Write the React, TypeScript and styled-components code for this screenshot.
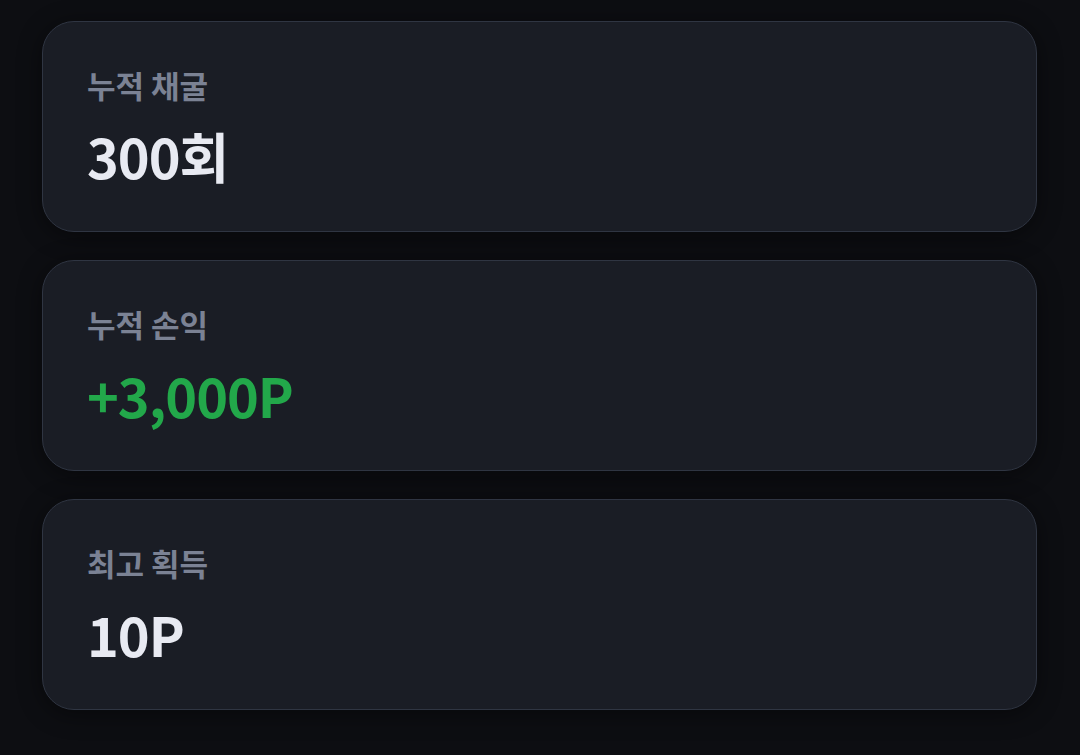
import React from 'react'
import styled, { createGlobalStyle } from 'styled-components'

const GlobalStyle = createGlobalStyle`
  html, body {
    margin: 0;
    padding: 0;
    background: #0d0e12;
  }
  body {
    font-family: 'Noto Sans CJK KR', 'Noto Sans', sans-serif;
  }
`

const Page = styled.div`
  min-height: 755px;
  box-sizing: border-box;
  padding: 21px 43px 0 42px;
  display: flex;
  flex-direction: column;
  gap: 28px;
  background: #0d0e12;
`
const Card = styled.div`
  height: 211px;
  box-sizing: border-box;
  padding: 0 44px;
  display: flex;
  flex-direction: column;
  justify-content: center;
  gap: 22px;
  background: #1a1d25;
  border: 1.5px solid #2f3542;
  border-radius: 32px;
  box-shadow: 0 4px 24px rgba(0, 0, 0, 0.45);
`
const Label = styled.div`
  font-size: 31px;
  font-weight: 700;
  line-height: 1.2;
  color: #7b8294;
`
const Value = styled.div<{ $tone?: 'up' | 'default' }>`
  font-size: 54px;
  font-weight: 700;
  line-height: 1.15;
  letter-spacing: -1px;
  color: ${props => (props.$tone === 'up' ? '#22a84a' : '#e8eaf2')};
`

const stats = [
  { label: '누적 채굴', value: '300회' },
  { label: '누적 손익', value: '+3,000P', tone: 'up' as const },
  { label: '최고 획득', value: '10P' }
]

const App = () => {
  return (
    <>
      <GlobalStyle />
      <Page>
        {stats.map(stat => (
          <Card key={stat.label}>
            <Label>{stat.label}</Label>
            <Value $tone={stat.tone}>{stat.value}</Value>
          </Card>
        ))}
      </Page>
    </>
  )
}

export default App
